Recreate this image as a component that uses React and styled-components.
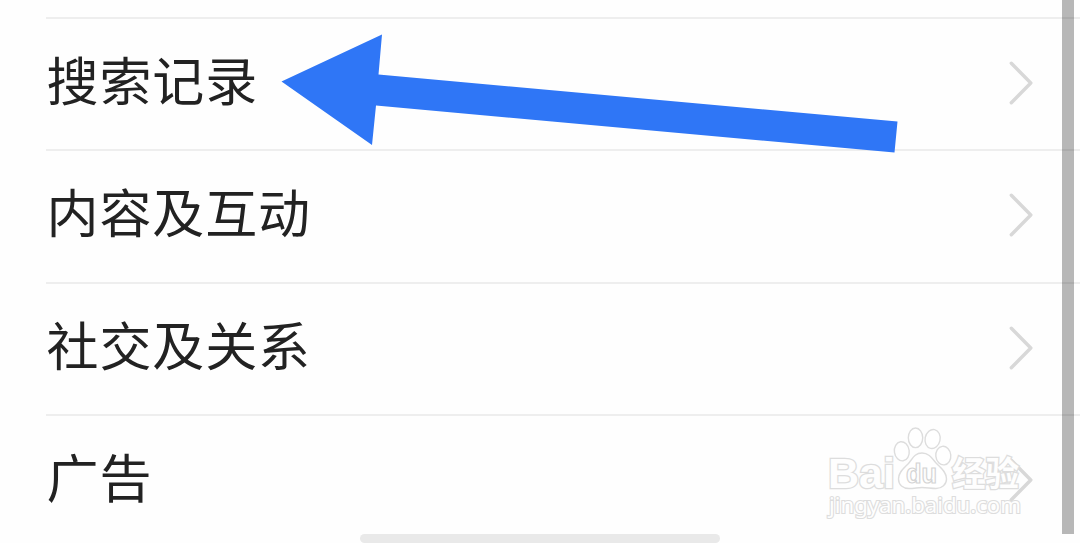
import React from "react";
import styled, { createGlobalStyle } from "styled-components";

const items = ["搜索记录", "内容及互动", "社交及关系", "广告"];

const App = () => {
  return (
    <Screen>
      <GlobalStyle />
      <List>
        {items.map((item) => (
          <Row key={item}>
            <Label>{item}</Label>
            <Chevron viewBox="0 0 26 46">
              <path d="M3.3 3.2 L22.8 23 L3.3 42.8" />
            </Chevron>
          </Row>
        ))}
      </List>
      <Arrow viewBox="0 0 1080 543">
        <polygon points="281.5,81.5 382,34.5 378.5,74.5 897.5,121.5 894.5,152.5 376,105.5 372,145" />
      </Arrow>
      <Watermark viewBox="820 420 210 105">
        <g className="brand">
          <text x="828" y="488" fontSize="43" textLength="67" lengthAdjust="spacingAndGlyphs">
            Bai
          </text>
          <text className="cjk" x="952" y="485.5" fontSize="34" textLength="67" lengthAdjust="spacingAndGlyphs">
            经验
          </text>
        </g>
        <ellipse cx="901.8" cy="451.3" rx="7.4" ry="9.6" transform="rotate(-8 901.8 451.3)" />
        <ellipse cx="915.5" cy="437.8" rx="7.2" ry="9.8" />
        <ellipse cx="932.6" cy="439" rx="7.5" ry="9.6" transform="rotate(12 932.6 439)" />
        <ellipse cx="943.3" cy="455.6" rx="7.5" ry="9.3" transform="rotate(-6 943.3 455.6)" />
        <path d="M922 453 C914 453 912 460 908 464 C904 468 898.5 472 898.5 479 C898.5 485 903 488.5 909 488.5 C914 488.5 918 487.5 922 487.5 C927 487.5 931 488.5 936 488.5 C942 488.5 946.5 484.5 946.5 479 C946.5 472 941 468 937 464 C933 460 930 453 922 453 Z" />
        <text className="du" x="906" y="483" fontSize="27" textLength="31" lengthAdjust="spacingAndGlyphs">
          du
        </text>
        <text className="url" x="829" y="513" fontSize="21.5" textLength="192" lengthAdjust="spacingAndGlyphs">
          jingyan.baidu.com
        </text>
      </Watermark>
      <Scrollbar />
      <HomeBar />
    </Screen>
  );
};

export default App;

const GlobalStyle = createGlobalStyle`
  body {
    margin: 0;
    background: #fefefe;
    overflow: hidden;
  }
`;

const Screen = styled.div`
  position: relative;
  width: 1080px;
  height: 543px;
  overflow: hidden;
  background: #fefefe;
`;

const List = styled.div`
  padding: 16.9px 0 0 46px;
`;

const Row = styled.div`
  display: flex;
  align-items: center;
  justify-content: space-between;
  box-sizing: border-box;
  height: 132.4px;
  padding: 0 46px 2px 0.5px;
  border-top: 2px solid #eeeeee;
`;

const Label = styled.span`
  margin-bottom: 8px;
  color: #222222;
  font-family: "Noto Sans CJK SC", sans-serif;
  font-size: 52px;
  line-height: 76px;
  letter-spacing: 0.9px;
`;

const Chevron = styled.svg`
  width: 26px;
  height: 46px;
  fill: none;
  stroke: #d8d8d8;
  stroke-width: 3.4;
  stroke-linecap: round;
  stroke-linejoin: round;
`;

const Arrow = styled.svg`
  position: absolute;
  top: 0;
  left: 0;
  width: 1080px;
  height: 543px;
  fill: #2f76f6;
`;

const Watermark = styled.svg`
  position: absolute;
  top: 420px;
  left: 820px;
  width: 210px;
  height: 105px;
  fill: rgba(255, 255, 255, 0.75);
  stroke: #dddddd;
  stroke-width: 1.4;

  text {
    font-family: "Liberation Sans", Arial, sans-serif;
    paint-order: stroke;
    stroke-width: 2.6;
    fill: #fefefe;
  }
  .brand text {
    font-weight: 700;
  }
  .brand .cjk {
    font-family: "Noto Sans CJK SC", sans-serif;
  }
  .du {
    font-weight: 700;
    paint-order: normal;
    stroke: #d4d4d4;
    stroke-width: 1.2;
  }
  .url {
    font-family: "Noto Sans", sans-serif;
    font-weight: 400;
    stroke-width: 2.2;
  }
`;

const Scrollbar = styled.div`
  position: absolute;
  top: 0;
  left: 1062px;
  width: 12px;
  height: 534px;
  background: rgba(0, 0, 0, 0.28);
`;

const HomeBar = styled.div`
  position: absolute;
  left: 360px;
  bottom: 0;
  width: 360px;
  height: 9px;
  border-radius: 5px;
  background: #e9e9e9;
`;
